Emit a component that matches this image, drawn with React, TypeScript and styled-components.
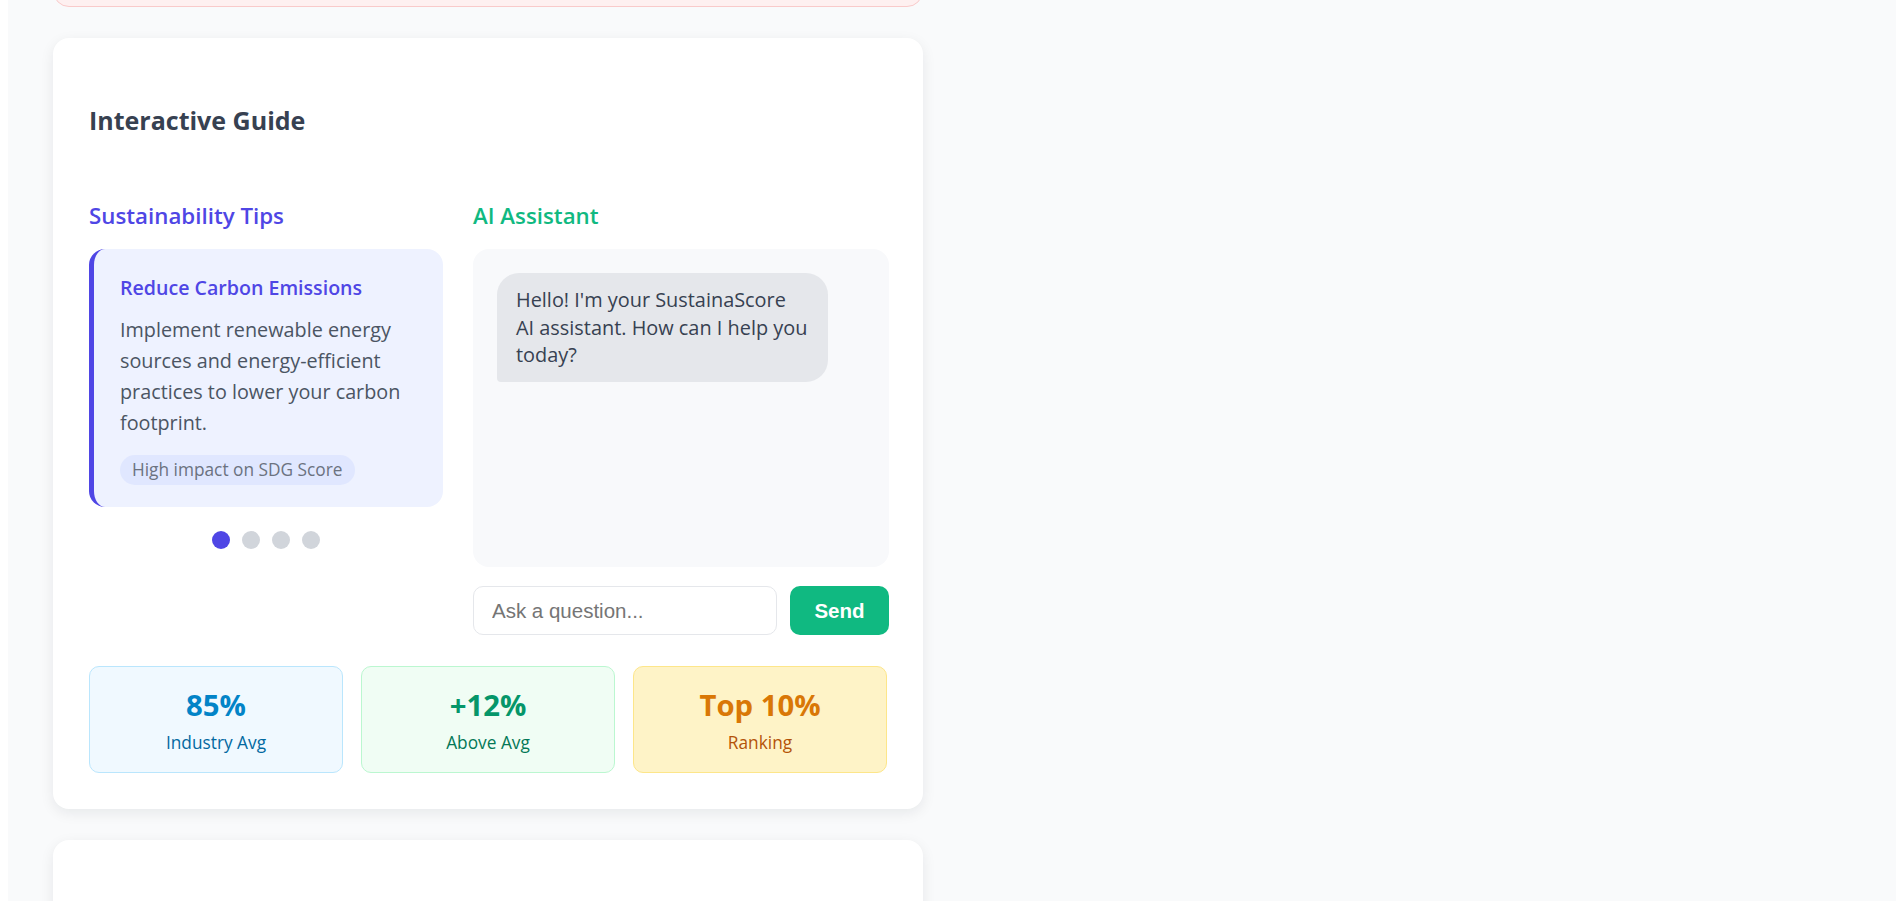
import React from 'react';
import styled, { createGlobalStyle } from 'styled-components';

const GlobalStyle = createGlobalStyle`
  html, body {
    margin: 0;
    background: #ffffff;
  }
  body {
    padding-left: 8px;
    font-family: 'Open Sans', 'Noto Sans', sans-serif;
  }
`;

const Page = styled.div`
  min-height: 100vh;
  background: #f9fafb;
  padding: 0 45px;
  display: flex;
  flex-direction: column;
  gap: 31px;
  overflow: hidden;
`;

const Alert = styled.div`
  width: 870px;
  height: 66px;
  margin-top: -59px;
  box-sizing: border-box;
  background: #fef0f0;
  border: 1px solid #f9caca;
  border-radius: 16px;
`;

const Card = styled.section<{ $tall?: boolean }>`
  width: 870px;
  box-sizing: border-box;
  background: #ffffff;
  border-radius: 16px;
  box-shadow: 0 4px 14px rgba(17, 24, 39, 0.08);
  padding: 36px;
  min-height: ${(p) => (p.$tall ? '200px' : 'auto')};
`;

const Title = styled.h2`
  margin: 30px 0 0;
  font-size: 25px;
  line-height: 32px;
  font-weight: 700;
  color: #374151;
`;

const Columns = styled.div`
  display: grid;
  grid-template-columns: 354px 1fr;
  gap: 30px;
  margin-top: 66px;
`;

const Column = styled.div`
  display: flex;
  flex-direction: column;
`;

const SubTitle = styled.h3<{ $color: string }>`
  margin: 0 0 19px;
  font-size: 22.3px;
  line-height: 28px;
  font-weight: 600;
  color: ${(p) => p.$color};
`;

const TipCard = styled.div`
  background: #eef2ff;
  border-left: 5px solid #4f46e5;
  border-radius: 16px;
  padding: 26px 24px 22px 26px;
`;

const TipTitle = styled.h4`
  margin: 0;
  font-size: 19.6px;
  line-height: 26px;
  font-weight: 600;
  color: #4f46e5;
`;

const TipText = styled.p`
  margin: 13px 0 0;
  font-size: 19.8px;
  line-height: 31px;
  color: #4b5563;
`;

const Tag = styled.span`
  display: inline-block;
  margin-top: 17px;
  padding: 4px 12px;
  border-radius: 999px;
  background: #e0e7ff;
  color: #6b7280;
  font-size: 17.3px;
  line-height: 22px;
`;

const Dots = styled.div`
  display: flex;
  justify-content: center;
  gap: 12px;
  margin-top: 24px;
`;

const Dot = styled.span<{ $active?: boolean }>`
  width: 18px;
  height: 18px;
  border-radius: 50%;
  background: ${(p) => (p.$active ? '#4f46e5' : '#d1d5db')};
`;

const ChatBox = styled.div`
  height: 318px;
  box-sizing: border-box;
  background: #f8f9fb;
  border-radius: 16px;
  padding: 24px;
`;

const Bubble = styled.div`
  width: fit-content;
  max-width: 330.5px;
  box-sizing: border-box;
  background: #e5e7eb;
  color: #374151;
  border-radius: 22px 22px 22px 4px;
  padding: 13px 19px;
  font-size: 19.9px;
  line-height: 27.5px;
`;

const InputRow = styled.div`
  display: flex;
  gap: 13px;
  margin-top: 19px;
`;

const Input = styled.input`
  flex: 1;
  height: 49px;
  box-sizing: border-box;
  border: 1px solid #e5e7eb;
  border-radius: 10px;
  padding: 0 18px;
  font-family: 'Liberation Sans', Arial, sans-serif;
  font-size: 20.5px;
  color: #374151;
  outline: none;
  &::placeholder {
    color: #757575;
  }
`;

const SendButton = styled.button`
  width: 99px;
  height: 49px;
  border: none;
  border-radius: 10px;
  background: #10b981;
  color: #ffffff;
  font-family: 'Liberation Sans', Arial, sans-serif;
  font-size: 20.5px;
  font-weight: 700;
`;

const Stats = styled.div`
  display: grid;
  grid-template-columns: repeat(3, 1fr);
  gap: 18px;
  margin-top: 31px;
`;

const Stat = styled.div<{ $bg: string; $border: string }>`
  background: ${(p) => p.$bg};
  border: 1px solid ${(p) => p.$border};
  border-radius: 10px;
  padding: 21px 0 18px;
  text-align: center;
`;

const StatValue = styled.div<{ $color: string }>`
  font-size: 29.3px;
  line-height: 35px;
  font-weight: 700;
  color: ${(p) => p.$color};
`;

const StatLabel = styled.div<{ $color: string }>`
  margin-top: 9px;
  font-size: 17.3px;
  line-height: 22px;
  color: ${(p) => p.$color};
`;

const stats = [
  { value: '85%', label: 'Industry Avg', bg: '#f0f9ff', border: '#bae6fd', color: '#0284c7', labelColor: '#0369a1' },
  { value: '+12%', label: 'Above Avg', bg: '#f0fdf4', border: '#bbf7d0', color: '#059669', labelColor: '#047857' },
  { value: 'Top 10%', label: 'Ranking', bg: '#fef3c7', border: '#fde68a', color: '#d97706', labelColor: '#b45309' },
];

const App = () => {
  return (
    <>
      <GlobalStyle />
      <Page>
        <Alert />
        <Card>
          <Title>Interactive Guide</Title>
          <Columns>
            <Column>
              <SubTitle $color="#4f46e5">Sustainability Tips</SubTitle>
              <TipCard>
                <TipTitle>Reduce Carbon Emissions</TipTitle>
                <TipText>
                  Implement renewable energy sources and energy-efficient practices to lower your carbon footprint.
                </TipText>
                <Tag>High impact on SDG Score</Tag>
              </TipCard>
              <Dots>
                <Dot $active />
                <Dot />
                <Dot />
                <Dot />
              </Dots>
            </Column>
            <Column>
              <SubTitle $color="#10b981">AI Assistant</SubTitle>
              <ChatBox>
                <Bubble>Hello! I'm your SustainaScore AI assistant. How can I help you today?</Bubble>
              </ChatBox>
              <InputRow>
                <Input placeholder="Ask a question..." />
                <SendButton>Send</SendButton>
              </InputRow>
            </Column>
          </Columns>
          <Stats>
            {stats.map((s) => (
              <Stat key={s.label} $bg={s.bg} $border={s.border}>
                <StatValue $color={s.color}>{s.value}</StatValue>
                <StatLabel $color={s.labelColor}>{s.label}</StatLabel>
              </Stat>
            ))}
          </Stats>
        </Card>
        <Card $tall />
      </Page>
    </>
  );
};

export default App;
